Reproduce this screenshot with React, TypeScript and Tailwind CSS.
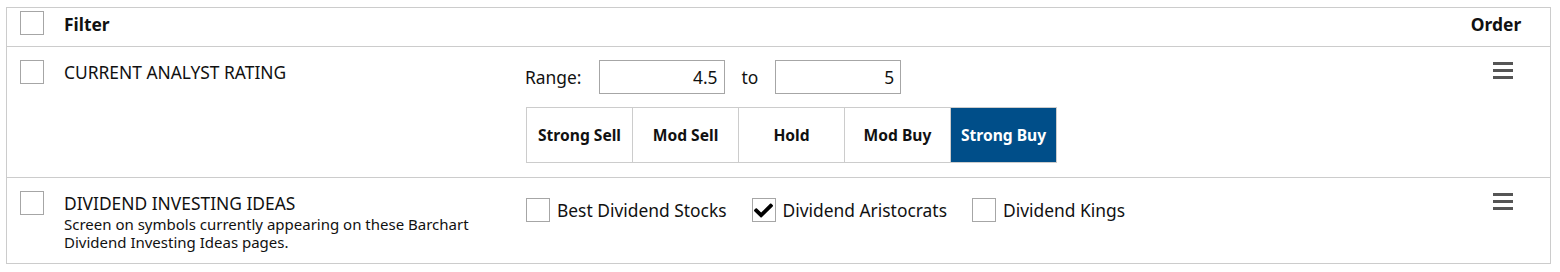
import React from 'react';

const ratings = ["Strong Sell", "Mod Sell", "Hold", "Mod Buy", "Strong Buy"];
const ideas = [
  { label: "Best Dividend Stocks", checked: false },
  { label: "Dividend Aristocrats", checked: true },
  { label: "Dividend Kings", checked: false },
];

function Box({ checked = false }: { checked?: boolean }) {
  return (
    <div className="w-[24px] h-[24px] shrink-0 border border-[#a6a6a6] bg-white flex items-center justify-center">
      {checked && (
        <svg viewBox="0 0 512 512" className="w-[19px] h-[19px] mt-[1px]" fill="#000">
          <path d="M173.898 439.404l-166.4-166.4c-9.997-9.997-9.997-26.206 0-36.204l36.203-36.204c9.997-9.998 26.207-9.998 36.204 0L192 312.69 432.095 72.596c9.997-9.997 26.207-9.997 36.204 0l36.203 36.204c9.997 9.997 9.997 26.206 0 36.204l-294.4 294.401c-9.998 9.997-26.207 9.997-36.204-.001z" />
        </svg>
      )}
    </div>
  );
}

function Handle() {
  return (
    <div className="ml-[49px] mt-[2px] w-[20px] flex flex-col gap-[4px] cursor-move">
      <div className="h-[3px] bg-[#555]"></div>
      <div className="h-[3px] bg-[#555]"></div>
      <div className="h-[3px] bg-[#555]"></div>
    </div>
  );
}

export default function App() {
  return (
    <div className="min-h-screen bg-white pt-[7px] pl-[6px] text-[#111] font-['Noto_Sans','Open_Sans',sans-serif]">
      <div className="w-[1545px] border border-[#ccc]">
        {/* Header */}
        <div className="flex h-[39px] border-b border-[#ccc]">
          <div className="w-[57px] pl-[13px] pt-[3px]"><Box /></div>
          <div className="w-[462px] pt-[4px] text-[17.4px] leading-[24px] font-bold">Filter</div>
          <div className="flex-1"></div>
          <div className="w-[106px] pt-[4px] pr-[2px] text-[17.4px] leading-[24px] font-bold text-center">Order</div>
        </div>

        {/* Current analyst rating */}
        <div className="flex pt-[13px] pb-[14px] border-b border-[#ccc]">
          <div className="w-[57px] pl-[13px]"><Box /></div>
          <div className="w-[462px] text-[17.4px] leading-[24px]">CURRENT ANALYST RATING</div>
          <div className="flex-1">
            <div className="flex items-center h-[34px] text-[17.4px]">
              <span className="-ml-[1px]">Range:</span>
              <input readOnly value="4.5" className="ml-[17px] w-[126px] h-[34px] border border-[#a6a6a6] text-right pr-[6px] outline-none" />
              <span className="ml-[17px]">to</span>
              <input readOnly value="5" className="ml-[17px] w-[126px] h-[34px] border border-[#a6a6a6] text-right pr-[6px] outline-none" />
            </div>
            <div className="mt-[13px] flex w-[531px] h-[56px] border border-[#ccc]">
              {ratings.map((r, i) => (
                <div
                  key={r}
                  className={`flex-1 flex items-center justify-center pt-[2px] text-[15.6px] font-bold ${i > 0 ? 'border-l border-[#ccc]' : ''} ${r === "Strong Buy" ? 'bg-[#004e89] text-white border-[#004e89]' : 'bg-white'}`}
                >
                  {r}
                </div>
              ))}
            </div>
          </div>
          <div className="w-[106px]"><Handle /></div>
        </div>

        {/* Dividend investing ideas */}
        <div className="flex pt-[13px] pb-[12px]">
          <div className="w-[57px] pl-[13px]"><Box /></div>
          <div className="w-[462px]">
            <div className="text-[17.4px] leading-[24px]">DIVIDEND INVESTING IDEAS</div>
            <p className="text-[15px] leading-[18px] w-[430px]">Screen on symbols currently appearing on these Barchart Dividend Investing Ideas pages.</p>
          </div>
          <div className="flex-1 flex items-start mt-[7px]">
            {ideas.map((d, i) => (
              <label key={d.label} className={`flex items-center ${i > 0 ? 'ml-[25px]' : ''}`}>
                <Box checked={d.checked} />
                <span className="ml-[7px] text-[17.4px] leading-[24px]">{d.label}</span>
              </label>
            ))}
          </div>
          <div className="w-[106px]"><Handle /></div>
        </div>
      </div>
    </div>
  );
}
